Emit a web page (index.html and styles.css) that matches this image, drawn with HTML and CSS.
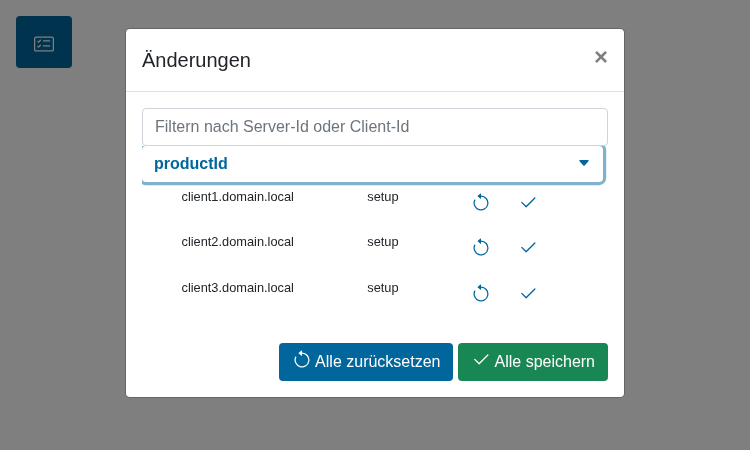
FILE: index.html
```
<!DOCTYPE html>
<html lang="de">
<head>
<meta charset="utf-8">
<title>Änderungen</title>
<link rel="stylesheet" href="styles.css">
</head>
<body>
<svg class="defs" aria-hidden="true">
  <symbol id="reset" viewBox="0 0 16 16"><path fill-rule="evenodd" d="M8 3a5 5 0 1 1-4.546 2.914.5.5 0 0 0-.908-.417A6 6 0 1 0 8 2v1z"/><path d="M8 4.466V.534a.25.25 0 0 0-.41-.192L5.23 2.308a.25.25 0 0 0 0 .384l2.36 1.966A.25.25 0 0 0 8 4.466z"/></symbol>
  <symbol id="check" viewBox="0 0 16 16"><path d="M13.854 3.646a.5.5 0 0 1 0 .708l-7 7a.5.5 0 0 1-.708 0l-3.5-3.5a.5.5 0 1 1 .708-.708L6.5 10.293l6.646-6.647a.5.5 0 0 1 .708 0z"/></symbol>
</svg>
<button class="open-changes" aria-label="Änderungen">
  <svg viewBox="0 0 16 16"><path d="M14.5 3a.5.5 0 0 1 .5.5v9a.5.5 0 0 1-.5.5h-13a.5.5 0 0 1-.5-.5v-9a.5.5 0 0 1 .5-.5h13zm-13-1A1.5 1.5 0 0 0 0 3.5v9A1.5 1.5 0 0 0 1.5 14h13a1.5 1.5 0 0 0 1.5-1.5v-9A1.5 1.5 0 0 0 14.5 2h-13z"/><path d="M7 5.5a.5.5 0 0 1 .5-.5h5a.5.5 0 0 1 0 1h-5a.5.5 0 0 1-.5-.5zm-1.496-.854a.5.5 0 0 1 0 .708l-1.5 1.5a.5.5 0 0 1-.708 0l-.5-.5a.5.5 0 1 1 .708-.708l.146.147 1.146-1.147a.5.5 0 0 1 .708 0zM7 9.5a.5.5 0 0 1 .5-.5h5a.5.5 0 0 1 0 1h-5a.5.5 0 0 1-.5-.5zm-1.496-.854a.5.5 0 0 1 0 .708l-1.5 1.5a.5.5 0 0 1-.708 0l-.5-.5a.5.5 0 0 1 .708-.708l.146.147 1.146-1.147a.5.5 0 0 1 .708 0z"/></svg>
</button>
<div class="backdrop">
  <div class="modal" role="dialog">
    <header class="modal-header">
      <h5 class="title">Änderungen</h5>
      <button class="close" aria-label="Close">×</button>
    </header>
    <div class="modal-body">
      <input class="filter" type="text" placeholder="Filtern nach Server-Id oder Client-Id">
      <div class="product">
        <button class="product-toggle"><span>productId</span><svg class="caret" viewBox="0 0 10 6"><path d="M.9 0h8.2q1.1 0 .5.9L5.7 5.5q-.7.7-1.4 0L.4.9Q-.2 0 .9 0z"/></svg></button>
      </div>
      <div class="changes">
        <div class="row"><span>client1.domain.local</span><span>setup</span><svg class="icon"><use href="#reset"/></svg><svg class="icon"><use href="#check"/></svg></div>
        <div class="row"><span>client2.domain.local</span><span>setup</span><svg class="icon"><use href="#reset"/></svg><svg class="icon"><use href="#check"/></svg></div>
        <div class="row"><span>client3.domain.local</span><span>setup</span><svg class="icon"><use href="#reset"/></svg><svg class="icon"><use href="#check"/></svg></div>
      </div>
      <div class="actions">
        <button class="btn primary"><svg class="icon"><use href="#reset"/></svg>Alle zurücksetzen</button>
        <button class="btn success"><svg class="icon"><use href="#check"/></svg>Alle speichern</button>
      </div>
    </div>
  </div>
</div>
</body>
</html>
```
FILE: styles.css
```
* { box-sizing: border-box; }
body {
  margin: 0;
  padding: 16px;
  height: 450px;
  overflow: hidden;
  background: #fff;
  color: #212529;
  font: 16px/1.5 "Liberation Sans", Arial, sans-serif;
}
button { font: inherit; border: 0; margin: 0; padding: 0; }
svg { fill: currentColor; display: block; }
.defs { display: none; }
.open-changes {
  display: flex;
  align-items: center;
  justify-content: center;
  width: 56px;
  height: 52px;
  padding-top: 4px;
  border-radius: 4px;
  background: #00669b;
  color: #fff;
}
.open-changes svg { width: 20px; height: 20px; }
.backdrop {
  position: fixed;
  inset: 0;
  padding-top: 28px;
  background: rgba(0, 0, 0, .5);
}
.modal {
  width: 500px;
  height: 370px;
  margin: 0 auto;
  border: 1px solid rgba(0, 0, 0, .2);
  border-radius: 4.8px;
  background: #fff;
  background-clip: padding-box;
}
.modal-header {
  display: flex;
  justify-content: space-between;
  align-items: flex-start;
  height: 63px;
  padding: 16px;
  border-bottom: 1px solid #dee2e6;
}
.title { margin: 0; font-size: 20px; font-weight: 400; line-height: 30px; }
.close {
  background: none;
  color: #000;
  opacity: .5;
  font-size: 24px;
  font-weight: 700;
  line-height: 24px;
}
.modal-body { padding: 16px; }
.filter {
  display: block;
  width: 100%;
  height: 38px;
  padding: 6px 12px;
  border: 1px solid #ced4da;
  border-radius: 4px;
  font: inherit;
}
.filter::placeholder { color: #6c757d; opacity: 1; }
.product { height: 40px; overflow: hidden; }
.product-toggle {
  display: flex;
  align-items: center;
  justify-content: space-between;
  width: 461px;
  height: 36px;
  padding: 0 14px 0 12px;
  border-radius: 4px;
  box-shadow: 0 0 0 3.2px rgba(0, 102, 155, .5);
  background: #fff;
  color: #00669b;
  font-weight: 700;
}
.caret { width: 10px; height: 6px; margin-top: -2px; }
.changes { height: 157px; }
.row {
  display: grid;
  grid-template-columns: 185.8px 103.7px 47px 20px;
  height: 45.4px;
  padding-left: 39.5px;
  font-size: 12.8px;
  line-height: 21px;
}
.row .icon { margin-top: 7px; color: #00669b; }
.icon { width: 20px; height: 20px; flex: none; }
.actions { display: flex; justify-content: flex-end; gap: 5px; }
.btn {
  display: flex;
  align-items: center;
  height: 38px;
  padding: 0 13px;
  border-radius: 4px;
  color: #fff;
}
.btn .icon { margin: -4px 3px 0 0; }
.primary { padding-right: 12px; background: #00669b; }
.success { background: #198754; }
.success .icon { margin-right: 4px; }
```
